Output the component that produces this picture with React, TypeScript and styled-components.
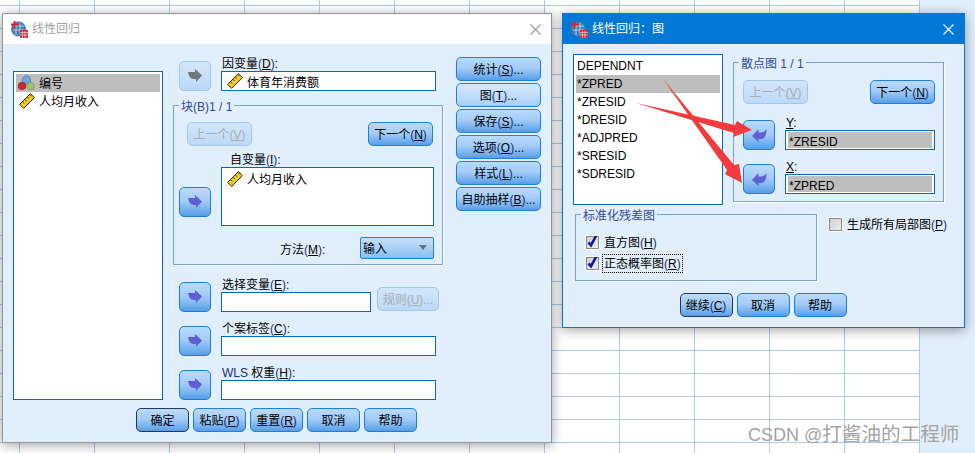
import React from "react";
import styled, { createGlobalStyle, css } from "styled-components";

const FONT = `"Liberation Sans", "Noto Sans CJK SC", sans-serif`;

const GlobalStyle = createGlobalStyle`
  html, body {
    margin: 0;
    padding: 0;
    background: #e1eefb;
    overflow: hidden;
  }
  * {
    box-sizing: border-box;
  }
`;

const Desktop = styled.div`
  position: relative;
  width: 975px;
  height: 453px;
  overflow: hidden;
  background: #e1eefb;
  font: 12px/14px ${FONT};
  color: #000;
`;

const Sheet = styled.div`
  width: 920px;
  height: 453px;
  background-color: #fff;
  background-image: linear-gradient(to right, #aecbe9 1px, transparent 1px),
    linear-gradient(to bottom, #aecbe9 1px, transparent 1px);
  background-size: 75px 23px;
  background-position: 19px 5px;
`;

const Dialog = styled.div<{ $active?: boolean }>`
  position: absolute;
  display: flex;
  flex-direction: column;
  background: #e1eefb;
  border: 1px solid ${({ $active }) => ($active ? "#0a78d2" : "#8d98a3")};
  box-shadow: 0 2px 11px rgba(0, 0, 0, 0.38);
`;

const RegressionWindow = styled(Dialog)`
  left: 2px;
  top: 13px;
  width: 550px;
  height: 430px;
`;

const PlotsWindow = styled(Dialog)`
  left: 562px;
  top: 13px;
  width: 403px;
  height: 315px;
`;

const TitleBar = styled.div<{ $active?: boolean }>`
  flex: none;
  height: 30px;
  display: flex;
  align-items: center;
  padding: 0 10px 0 7px;
  gap: 4px;
  background: ${({ $active }) => ($active ? "#0078d4" : "#fff")};
  color: ${({ $active }) => ($active ? "#fff" : "#a3a3a3")};
`;

const TitleText = styled.span`
  flex: 1;
`;

const MainRow = styled.div`
  display: flex;
`;

const RegressionBody = styled.div`
  display: flex;
  flex-direction: column;
  padding: 13px 11px 9px 10px;
`;

const PlotsBody = styled.div`
  display: flex;
  flex-direction: column;
  padding: 10px 11px 9px 10px;
`;

const ListBox = styled.div<{ $w: number; $h: number }>`
  flex: none;
  width: ${({ $w }) => $w}px;
  height: ${({ $h }) => $h}px;
  padding: 2px;
  background: #fff;
  border: 1px solid #0a66b8;
`;

const VarList = styled(ListBox)`
  margin-top: 14px;
`;

const ListItem = styled.div<{ $selected?: boolean }>`
  display: flex;
  align-items: center;
  height: 18px;
  padding-left: 1px;
  white-space: nowrap;
  background: ${({ $selected }) => ($selected ? "#bebebe" : "transparent")};
`;

const IconItem = styled(ListItem)`
  gap: 4px;
  padding-left: 2px;
`;

const LowText = styled.span<{ $drop: number }>`
  padding-top: ${({ $drop }) => $drop}px;
`;

const Middle = styled.div`
  flex: none;
  width: 270px;
  margin-left: 10px;
`;

const RightButtons = styled.div`
  flex: none;
  width: 85px;
  margin-left: 13px;
  display: flex;
  flex-direction: column;
  gap: 2px;
`;

const VarRow = styled.div<{ $top: number; $indent?: number }>`
  display: flex;
  align-items: flex-end;
  gap: 10px;
  margin-top: ${({ $top }) => $top}px;
  padding-left: ${({ $indent }) => $indent ?? 6}px;
`;

const FieldStack = styled.div`
  display: flex;
  flex-direction: column;
`;

const FieldLabel = styled.label<{ $indent?: number }>`
  height: 14px;
  padding-left: ${({ $indent }) => $indent ?? 1}px;
  white-space: nowrap;
`;

const FieldBox = styled.div<{ $w: number; $filled?: boolean }>`
  display: flex;
  align-items: center;
  gap: 4px;
  width: ${({ $w }) => $w}px;
  height: 20px;
  padding: ${({ $filled }) => ($filled ? "1px 2px" : "0 0 0 4px")};
  background: #fff;
  border: 1px solid #0a66b8;
  white-space: nowrap;
`;

const FilledText = styled.span`
  flex: 1;
  height: 100%;
  display: flex;
  align-items: center;
  padding: 3px 0 0 1px;
  background: #bebebe;
`;

const Group = styled.div<{ $w: number; $h: number }>`
  position: relative;
  flex: none;
  width: ${({ $w }) => $w}px;
  height: ${({ $h }) => $h}px;
  border: 1px solid #78a5d6;
  box-shadow: 1px 1px 0 #fff;
`;

const GroupTitle = styled.span`
  position: absolute;
  left: 5px;
  top: -6px;
  padding: 0 2px;
  background: #e1eefb;
  color: #34479b;
  white-space: nowrap;
`;

const BlockGroup = styled(Group)`
  margin-top: 14px;
  padding-top: 16px;
`;

const ScatterGroup = styled(Group)`
  margin: 8px 0 0 10px;
  padding-top: 17px;
`;

const NavRow = styled.div<{ $left: number; $right: number }>`
  display: flex;
  justify-content: space-between;
  padding: 0 ${({ $right }) => $right}px 0 ${({ $left }) => $left}px;
`;

const MethodRow = styled.div`
  display: flex;
  align-items: center;
  margin-top: 11px;
  padding-left: 106px;
`;

const MethodLabel = styled.span`
  width: 80px;
  padding-top: 3px;
`;

const Dropdown = styled.div`
  position: relative;
  width: 74px;
  height: 22px;
  display: flex;
  align-items: center;
  padding: 2px 0 0 2px;
  border: 1px solid #1f80d8;
  border-radius: 2px;
  background: linear-gradient(#c3dffb, #a9d0f7 50%, #86bcf2);
`;

const DropdownCaret = styled.span`
  position: absolute;
  right: 6px;
  top: 7px;
  border-left: 4.5px solid transparent;
  border-right: 4.5px solid transparent;
  border-top: 5px solid #6d6d6d;
`;

const tones = {
  normal: css`
    border-color: #1c80d9;
    background: linear-gradient(#b9dafb, #a4ccf6 45%, #77b2ef 78%, #589de6);
  `,
  light: css`
    border-color: #1c80d9;
    background: linear-gradient(#d3e8fc, #c2def9 50%, #a6cef6);
  `,
  primary: css`
    border-color: #26384d;
    background: linear-gradient(#b9dafb, #a4ccf6 45%, #77b2ef 78%, #589de6);
  `,
  disabled: css`
    border-color: #9fc9f1;
    background: linear-gradient(#d2e6fb, #bbd9f7);
    color: #a9adb2;
  `,
};

type Tone = keyof typeof tones;

const Btn = styled.button<{ $tone?: Tone; $w?: number }>`
  flex: none;
  width: ${({ $w }) => ($w ? `${$w}px` : "100%")};
  height: 24px;
  padding: 1px 0 0;
  border: 1px solid;
  border-radius: 5px;
  font: inherit;
  color: #000;
  white-space: nowrap;
  ${({ $tone }) => tones[$tone ?? "normal"]}
`;

const RuleBtn = styled(Btn)`
  margin: 0 0 1px -4px;
`;

const MoveBtn = styled(Btn)<{ $lift?: number }>`
  display: flex;
  align-items: center;
  justify-content: center;
  width: 32px;
  height: 30px;
  padding: 0;
  margin-bottom: ${({ $lift }) => $lift ?? 0}px;
`;

const FooterRow = styled.div<{ $top: number }>`
  display: flex;
  justify-content: center;
  gap: 4px;
  margin-top: ${({ $top }) => $top}px;
`;

const Hot = styled.span`
  color: #1d2f6f;
  & u {
    color: #000;
  }
`;

const Disabled = styled.span`
  & u {
    color: inherit;
  }
`;

const ResidualGroup = styled(Group)`
  margin-left: 2px;
  padding: 17px 0 0 10px;
`;

const BottomRow = styled.div`
  display: flex;
  margin-top: 9px;
`;

const CheckRow = styled.div`
  display: flex;
  align-items: center;
  height: 21px;
`;

const CheckBoxMark = styled.span`
  flex: none;
  width: 13px;
  height: 13px;
  display: block;
  border: 1px solid #8a8a8a;
  outline: 1px solid #fff;
  background: linear-gradient(135deg, #cfcfcf, #eeeeee);
`;

const CheckGlyph = styled.svg`
  display: block;
  overflow: visible;
`;

const CheckText = styled.span<{ $focus?: boolean }>`
  margin-left: 3px;
  height: 19px;
  line-height: 18px;
  padding: 0 1px;
  white-space: nowrap;
  border: 1px dotted ${({ $focus }) => ($focus ? "#000" : "transparent")};
`;

const LooseCheck = styled(CheckRow)`
  align-self: flex-start;
  margin-left: 12px;
`;

const Watermark = styled.span`
  position: absolute;
  left: 748px;
  top: 423px;
  font-size: 18px;
  line-height: 22px;
  color: #a3a3a3;
  white-space: nowrap;
`;

const WatermarkName = styled.span`
  font-size: 19.6px;
`;

const Annotations = styled.svg`
  position: absolute;
  left: 0;
  top: 0;
  pointer-events: none;
`;

const InlineIcon = styled.svg`
  flex: none;
  display: block;
`;

const AppIcon = () => (
  <InlineIcon width="18" height="18" viewBox="0 0 18 18">
    <circle cx="8.500" cy="9" r="7.500" fill="#3f7fb5" />
    <path d="M3 6h11M3 10h11M6 3v12M10 3v12" stroke="#bcd6ea" strokeWidth="0.9" />
    <path d="M4.500 1v8M1 4.500h8" stroke="#d8202c" strokeWidth="1.8" />
    <rect x="10" y="10" width="8" height="8" fill="#c8303c" />
    <path d="M10 12.500h8M10 15h8M12.500 11v7M15 11v7" stroke="#f4d2d5" strokeWidth="0.7" />
  </InlineIcon>
);

const CloseIcon = ({ color }: { color: string }) => (
  <InlineIcon width="11" height="11" viewBox="0 0 11 11">
    <path d="M.5.5l10 10M10.500.5l-10 10" stroke={color} strokeWidth="1.1" fill="none" />
  </InlineIcon>
);

const RulerIcon = () => (
  <InlineIcon width="17" height="16" viewBox="-1 0 17 16">
    <path d="M.6 11.400L11.400.6l4 4L4.600 15.400z" fill="#f5c91f" stroke="#2a2a20" strokeWidth="1" />
    <path d="M3.400 8.600l1.800 1.800M5.800 6.200l1.800 1.800M8.200 3.800L10 5.600M10.600 1.400l1.800 1.800" stroke="#2a2a20" strokeWidth="0.9" />
  </InlineIcon>
);

const NominalIcon = () => (
  <InlineIcon width="17" height="16" viewBox="0 0 17 16">
    <circle cx="8.500" cy="5" r="4.200" fill="#6fa6dc" stroke="#3d6ea5" strokeWidth="0.7" />
    <circle cx="4" cy="11" r="3.800" fill="#d2252f" stroke="#8e1820" strokeWidth="0.6" />
    <circle cx="12.600" cy="11" r="3.800" fill="#a3c667" stroke="#6f8f3e" strokeWidth="0.6" />
  </InlineIcon>
);

const MoveArrow = ({ color }: { color: string }) => (
  <InlineIcon width="15" height="14" viewBox="0 0 15 14">
    <path d="M0 3h7V0l7 6.500-6 6.500V10H5.500C2.500 10 .8 7 0 3z" fill={color} />
  </InlineIcon>
);

const ReturnArrow = ({ color }: { color: string }) => (
  <InlineIcon width="15" height="15" viewBox="0 0 15 15">
    <path d="M0 8l6.500-7v3.500h3c1.500 0 3-1 5-3.500 0 6-2 10-5 10h-3V14z" fill={color} />
  </InlineIcon>
);

const Check = ({ focus, children }: { focus?: boolean; children: React.ReactNode }) => (
  <CheckRow>
    <CheckBoxMark>
      <CheckGlyph width="11" height="11" viewBox="0 0 11 11">
        <path d="M1.500 5.500l2.500 2.700L9.300-1.500" stroke="#16169a" strokeWidth="2.600" fill="none" />
      </CheckGlyph>
    </CheckBoxMark>
    <CheckText $focus={focus}>{children}</CheckText>
  </CheckRow>
);

const M = ({ k }: { k: string }) => (
  <Hot>
    (<u>{k}</u>)
  </Hot>
);

const sideButtons: { label: string; k: string; tone?: Tone }[] = [
  { label: "统计", k: "S" },
  { label: "图", k: "T", tone: "light" },
  { label: "保存", k: "S" },
  { label: "选项", k: "O" },
  { label: "样式", k: "L" },
  { label: "自助抽样", k: "B" },
];

const residuals = ["DEPENDNT", "*ZPRED", "*ZRESID", "*DRESID", "*ADJPRED", "*SRESID", "*SDRESID"];

const App = () => (
  <Desktop>
    <GlobalStyle />
    <Sheet />

    <RegressionWindow>
      <TitleBar>
        <AppIcon />
        <TitleText>线性回归</TitleText>
        <CloseIcon color="#9a9a9a" />
      </TitleBar>
      <RegressionBody>
        <MainRow>
          <VarList $w={150} $h={329}>
            <IconItem $selected>
              <NominalIcon />
              <LowText $drop={2}>编号</LowText>
            </IconItem>
            <IconItem>
              <RulerIcon />
              <LowText $drop={2}>人均月收入</LowText>
            </IconItem>
          </VarList>
          <Middle>
            <VarRow $top={0}>
              <MoveBtn $tone="disabled">
                <MoveArrow color="#6f777d" />
              </MoveBtn>
              <FieldStack>
                <FieldLabel>
                  因变量
                  <M k="D" />:
                </FieldLabel>
                <FieldBox $w={215}>
                  <RulerIcon />
                  <LowText $drop={4}>体育年消费额</LowText>
                </FieldBox>
              </FieldStack>
            </VarRow>

            <BlockGroup $w={270} $h={160}>
              <GroupTitle>块(B)1 / 1</GroupTitle>
              <NavRow $left={13} $right={9}>
                <Btn $tone="disabled" $w={65}>
                  <Disabled>
                    上一个(<u>V</u>)
                  </Disabled>
                </Btn>
                <Btn $w={65}>
                  下一个
                  <M k="N" />
                </Btn>
              </NavRow>
              <VarRow $top={7} $indent={5}>
                <MoveBtn $lift={9}>
                  <MoveArrow color="#5f5fd2" />
                </MoveBtn>
                <FieldStack>
                  <FieldLabel $indent={9}>
                    自变量
                    <M k="I" />:
                  </FieldLabel>
                  <ListBox $w={213} $h={59}>
                    <IconItem>
                      <RulerIcon />
                      <LowText $drop={2}>人均月收入</LowText>
                    </IconItem>
                  </ListBox>
                </FieldStack>
              </VarRow>
              <MethodRow>
                <MethodLabel>
                  方法
                  <M k="M" />:
                </MethodLabel>
                <Dropdown>
                  输入
                  <DropdownCaret />
                </Dropdown>
              </MethodRow>
            </BlockGroup>

            <VarRow $top={13}>
              <MoveBtn>
                <MoveArrow color="#5f5fd2" />
              </MoveBtn>
              <FieldStack>
                <FieldLabel>
                  选择变量
                  <M k="E" />:
                </FieldLabel>
                <FieldBox $w={150} />
              </FieldStack>
              <RuleBtn $tone="disabled" $w={62}>
                <Disabled>
                  规则(<u>U</u>)...
                </Disabled>
              </RuleBtn>
            </VarRow>
            <VarRow $top={10}>
              <MoveBtn>
                <MoveArrow color="#5f5fd2" />
              </MoveBtn>
              <FieldStack>
                <FieldLabel>
                  个案标签
                  <M k="C" />:
                </FieldLabel>
                <FieldBox $w={215} />
              </FieldStack>
            </VarRow>
            <VarRow $top={10}>
              <MoveBtn>
                <MoveArrow color="#5f5fd2" />
              </MoveBtn>
              <FieldStack>
                <FieldLabel>
                  <Hot>WLS</Hot> 权重
                  <M k="H" />:
                </FieldLabel>
                <FieldBox $w={215} />
              </FieldStack>
            </VarRow>
          </Middle>
          <RightButtons>
            {sideButtons.map((b) => (
              <Btn key={b.label} $tone={b.tone}>
                {b.label}
                <M k={b.k} />
                ...
              </Btn>
            ))}
          </RightButtons>
        </MainRow>
        <FooterRow $top={8}>
          <Btn $tone="primary" $w={53}>
            确定
          </Btn>
          <Btn $w={53}>
            粘贴
            <M k="P" />
          </Btn>
          <Btn $w={53}>
            重置
            <M k="R" />
          </Btn>
          <Btn $w={53}>取消</Btn>
          <Btn $w={53}>帮助</Btn>
        </FooterRow>
      </RegressionBody>
    </RegressionWindow>

    <PlotsWindow $active>
      <TitleBar $active>
        <AppIcon />
        <TitleText>线性回归：图</TitleText>
        <CloseIcon color="#fff" />
      </TitleBar>
      <PlotsBody>
        <MainRow>
          <ListBox $w={150} $h={151}>
            {residuals.map((r) => (
              <ListItem key={r} $selected={r === "*ZPRED"}>
                {r}
              </ListItem>
            ))}
          </ListBox>
          <ScatterGroup $w={211} $h={140}>
            <GroupTitle>散点图 1 / 1</GroupTitle>
            <NavRow $left={9} $right={8}>
              <Btn $tone="disabled" $w={65}>
                <Disabled>
                  上一个(<u>V</u>)
                </Disabled>
              </Btn>
              <Btn $w={65}>
                下一个
                <M k="N" />
              </Btn>
            </NavRow>
            <VarRow $top={12} $indent={9}>
              <MoveBtn>
                <ReturnArrow color="#5f5fd2" />
              </MoveBtn>
              <FieldStack>
                <FieldLabel>
                  <u>Y</u>:
                </FieldLabel>
                <FieldBox $w={150} $filled>
                  <FilledText>*ZRESID</FilledText>
                </FieldBox>
              </FieldStack>
            </VarRow>
            <VarRow $top={10} $indent={9}>
              <MoveBtn>
                <ReturnArrow color="#5f5fd2" />
              </MoveBtn>
              <FieldStack>
                <FieldLabel>
                  <u>X</u>:
                </FieldLabel>
                <FieldBox $w={150} $filled>
                  <FilledText>*ZPRED</FilledText>
                </FieldBox>
              </FieldStack>
            </VarRow>
          </ScatterGroup>
        </MainRow>
        <BottomRow>
          <ResidualGroup $w={242} $h={67}>
            <GroupTitle>标准化残差图</GroupTitle>
            <Check>
              直方图
              <M k="H" />
            </Check>
            <Check focus>
              正态概率图
              <M k="R" />
            </Check>
          </ResidualGroup>
          <LooseCheck>
            <CheckBoxMark />
            <CheckText>
              生成所有局部图
              <M k="P" />
            </CheckText>
          </LooseCheck>
        </BottomRow>
        <FooterRow $top={12}>
          <Btn $tone="primary" $w={53}>
            继续
            <M k="C" />
          </Btn>
          <Btn $w={53}>取消</Btn>
          <Btn $w={53}>帮助</Btn>
        </FooterRow>
      </PlotsBody>
    </PlotsWindow>

    <Annotations width="975" height="453" viewBox="0 0 975 453">
      <polygon points="663,79 734,165 739,164 742,183 725,174 727,170" fill="#f23b3c" />
      <polygon points="636,103 735,125 737,121 752,130 733,137 734,133" fill="#f23b3c" />
    </Annotations>

    <Watermark>
      CSDN @<WatermarkName>打酱油的工程师</WatermarkName>
    </Watermark>
  </Desktop>
);

export default App;
